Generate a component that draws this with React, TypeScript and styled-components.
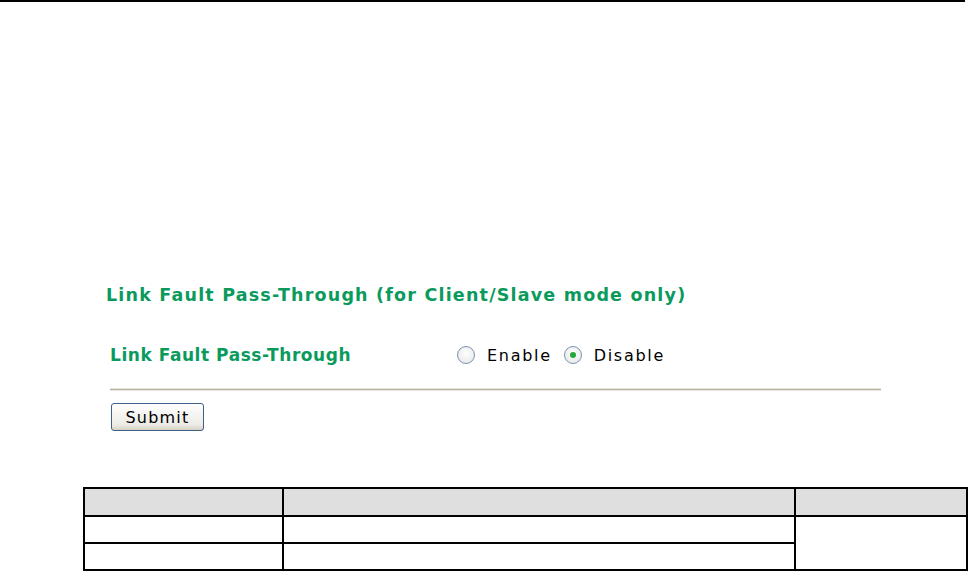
import React from "react";
import styled, { createGlobalStyle } from "styled-components";

const Global = createGlobalStyle`
  html, body { margin: 0; padding: 0; background: #fff; }
  body { width: 970px; height: 571px; overflow: hidden; font-family: "DejaVu Sans", Verdana, sans-serif; }
`;

const Page = styled.div`
  width: 970px;
  height: 571px;
  display: flex;
  flex-direction: column;
  & > * { flex-shrink: 0; }
`;

const TopRule = styled.div`
  width: 965px;
  height: 2px;
  background: #000;
`;

const Panel = styled.section`
  margin: 281px 0 0 106px;
  width: 775px;
  display: flex;
  flex-direction: column;
`;

const Heading = styled.h2`
  margin: 0;
  font-size: 17.5px;
  font-weight: bold;
  color: #0a9a5c;
  line-height: 24px;
  letter-spacing: 1.2px;
`;

const FieldRow = styled.div`
  display: flex;
  align-items: center;
  margin: 36px 0 0 4px;
  height: 24px;
`;

const Label = styled.span`
  width: 347px;
  font-size: 17px;
  font-weight: bold;
  color: #0a9a5c;
  letter-spacing: 0.55px;
`;

const Option = styled.label`
  display: flex;
  align-items: center;
  gap: 12px;
  margin-right: 12px;
  font-size: 16px;
  color: #000;
  letter-spacing: 1.7px;
`;

const Radio = styled.span<{ $checked?: boolean }>`
  width: 18px;
  height: 18px;
  border-radius: 50%;
  border: 1px solid #7a93b0;
  background: radial-gradient(circle at 50% 40%, #ffffff 0%, #e4e4e4 100%);
  display: flex;
  align-items: center;
  justify-content: center;
  box-sizing: border-box;
  &::after {
    content: "";
    display: ${(p) => (p.$checked ? "block" : "none")};
    width: 6px;
    height: 6px;
    border-radius: 50%;
    background: #23a837;
  }
`;

const Divider = styled.div`
  margin: 21px 0 0 4px;
  width: 771px;
  height: 3px;
  background: linear-gradient(#e4e2da 0, #e4e2da 1px, #b6b4a4 1px, #b6b4a4 2px, #e8e6df 2px);
`;

const SubmitButton = styled.button`
  margin: 12px 0 0 5px;
  width: 93px;
  height: 28px;
  border: 1px solid #3e5f86;
  border-radius: 3px;
  background: linear-gradient(#ffffff, #ecebe6 80%, #d6d2c4);
  font-family: "DejaVu Sans", Verdana, sans-serif;
  font-size: 16px;
  letter-spacing: 1.2px;
  color: #000;
  padding: 0;
  align-self: flex-start;
`;

const Table = styled.table`
  margin: 56px 0 0 83px;
  width: 885px;
  border-collapse: collapse;
`;

const HeadCell = styled.th<{ $w: number }>`
  width: ${(p) => p.$w}px;
  height: 26px;
  background: #dfdfdf;
  border: 2px solid #000;
  padding: 0;
`;

const Cell = styled.td`
  height: 25px;
  border: 2px solid #000;
  padding: 0;
`;

export default function App() {
  return (
    <>
      <Global />
      <Page>
        <TopRule />
        <Panel>
          <Heading>Link Fault Pass-Through (for Client/Slave mode only)</Heading>
          <FieldRow>
            <Label>Link Fault Pass-Through</Label>
            <Option>
              <Radio />
              Enable
            </Option>
            <Option>
              <Radio $checked />
              Disable
            </Option>
          </FieldRow>
          <Divider />
          <SubmitButton>Submit</SubmitButton>
        </Panel>
        <Table>
          <thead>
            <tr>
              <HeadCell $w={199} />
              <HeadCell $w={514} />
              <HeadCell $w={172} />
            </tr>
          </thead>
          <tbody>
            <tr>
              <Cell />
              <Cell />
              <Cell rowSpan={2} />
            </tr>
            <tr>
              <Cell />
              <Cell />
            </tr>
          </tbody>
        </Table>
      </Page>
    </>
  );
}
